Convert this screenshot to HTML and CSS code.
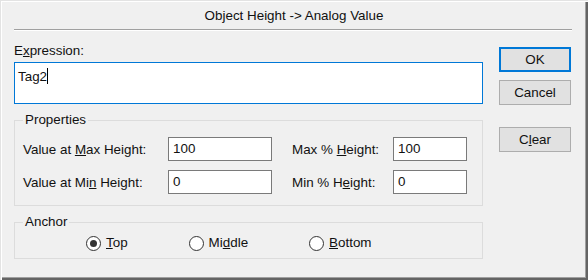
FILE: index.html
```html
<!DOCTYPE html>
<html lang="en">
<head>
    <meta charset="UTF-8">
    <title>Object Height -> Analog Value</title>
    <link rel="stylesheet" href="styles.css">
</head>
<body>
    <div class="window">
        <div class="title">Object Height -&gt; Analog Value</div>
        <div class="separator"></div>
        <div class="main">
            <div class="left">
                <label class="expr-label">E<u>x</u>pression:</label>
                <div class="expr-box">Tag2<span class="caret"></span></div>

                <fieldset class="group props">
                    <legend>Properties</legend>
                    <div class="grid">
                        <label>Value at <u>M</u>ax Height:</label>
                        <div class="field wide">100</div>
                        <label>Max % <u>H</u>eight:</label>
                        <div class="field">100</div>
                        <label>Value at Mi<u>n</u> Height:</label>
                        <div class="field wide">0</div>
                        <label>Min % H<u>e</u>ight:</label>
                        <div class="field">0</div>
                    </div>
                </fieldset>

                <fieldset class="group anchor">
                    <legend>Anchor</legend>
                    <div class="radios">
                        <div class="radio"><span class="dot checked"></span><span><u>T</u>op</span></div>
                        <div class="radio"><span class="dot"></span><span>Mi<u>d</u>dle</span></div>
                        <div class="radio"><span class="dot"></span><span><u>B</u>ottom</span></div>
                    </div>
                </fieldset>
            </div>
            <div class="buttons">
                <button class="default">OK</button>
                <button>Cancel</button>
                <button class="clear">C<u>l</u>ear</button>
            </div>
        </div>
    </div>
</body>
</html>
```

FILE: styles.css
```css
body {
    margin: 0;
    font-family: 'Liberation Sans', Arial, sans-serif;
    font-size: 13.4px;
    color: #111;
    background: #f0f0f0;
}
.window {
    width: 588px;
    height: 280px;
    box-sizing: border-box;
    background: #f0f0f0;
    box-shadow: inset 1px 1px 0 #e3e3e3, inset 2px 2px 0 #fff,
                inset -2px -2px 0 #646464, inset -3px -3px 0 #a0a0a0;
}
.title {
    padding-top: 8px;
    height: 16px;
    line-height: 16px;
    text-align: center;
}
.separator {
    margin: 5px 16px 0 14px;
    height: 1px;
    background: #a0a0a0;
    border-bottom: 1px solid #fff;
}
.main {
    display: flex;
    gap: 16px;
    padding: 11px 14px 0 14px;
}
.left {
    width: 469px;
}
.expr-label {
    display: block;
    height: 16px;
    line-height: 16px;
    margin-top: 1px;
}
.expr-box {
    margin-top: 3px;
    height: 42px;
    box-sizing: border-box;
    border: 1px solid #0078d7;
    background: #fff;
    padding: 5px 3px;
    line-height: 16px;
}
.caret {
    display: inline-block;
    width: 1px;
    height: 16px;
    background: #000;
    vertical-align: -3px;
}
.group {
    margin: 8px 0 0 0;
    padding: 9px 8px 11px 8px;
    border: 1px solid #dcdcdc;
    min-width: 0;
}
.group legend {
    padding: 0 2px;
    line-height: 16px;
}
.grid {
    display: grid;
    grid-template-columns: 145px 124px 101px 74px;
    row-gap: 9px;
    align-items: center;
}
.field {
    height: 24px;
    box-sizing: border-box;
    border: 1px solid #7a7a7a;
    background: #fff;
    padding-left: 4px;
    line-height: 22px;
}
.field.wide {
    width: 104px;
}
.anchor {
    padding: 5px 8px 7px 8px;
}
.radios {
    display: flex;
    gap: 61px;
    padding-left: 63px;
    line-height: 16px;
}
.radio {
    display: flex;
    align-items: center;
    gap: 5px;
}
.dot {
    width: 15px;
    height: 15px;
    box-sizing: border-box;
    border: 1px solid #333;
    border-radius: 50%;
    background: #fff;
    position: relative;
}
.dot.checked::after {
    content: '';
    position: absolute;
    left: 3px;
    top: 3px;
    width: 7px;
    height: 7px;
    border-radius: 50%;
    background: #333;
}
.buttons {
    display: flex;
    flex-direction: column;
    width: 72px;
    padding-top: 5px;
}
button {
    width: 72px;
    height: 25px;
    margin: 0 0 8px 0;
    padding: 0;
    font-family: inherit;
    font-size: 13.4px;
    color: #111;
    background: #e1e1e1;
    border: 1px solid #adadad;
}
button.default {
    border: 2px solid #0078d7;
}
button.clear {
    margin-top: 14px;
}
```
